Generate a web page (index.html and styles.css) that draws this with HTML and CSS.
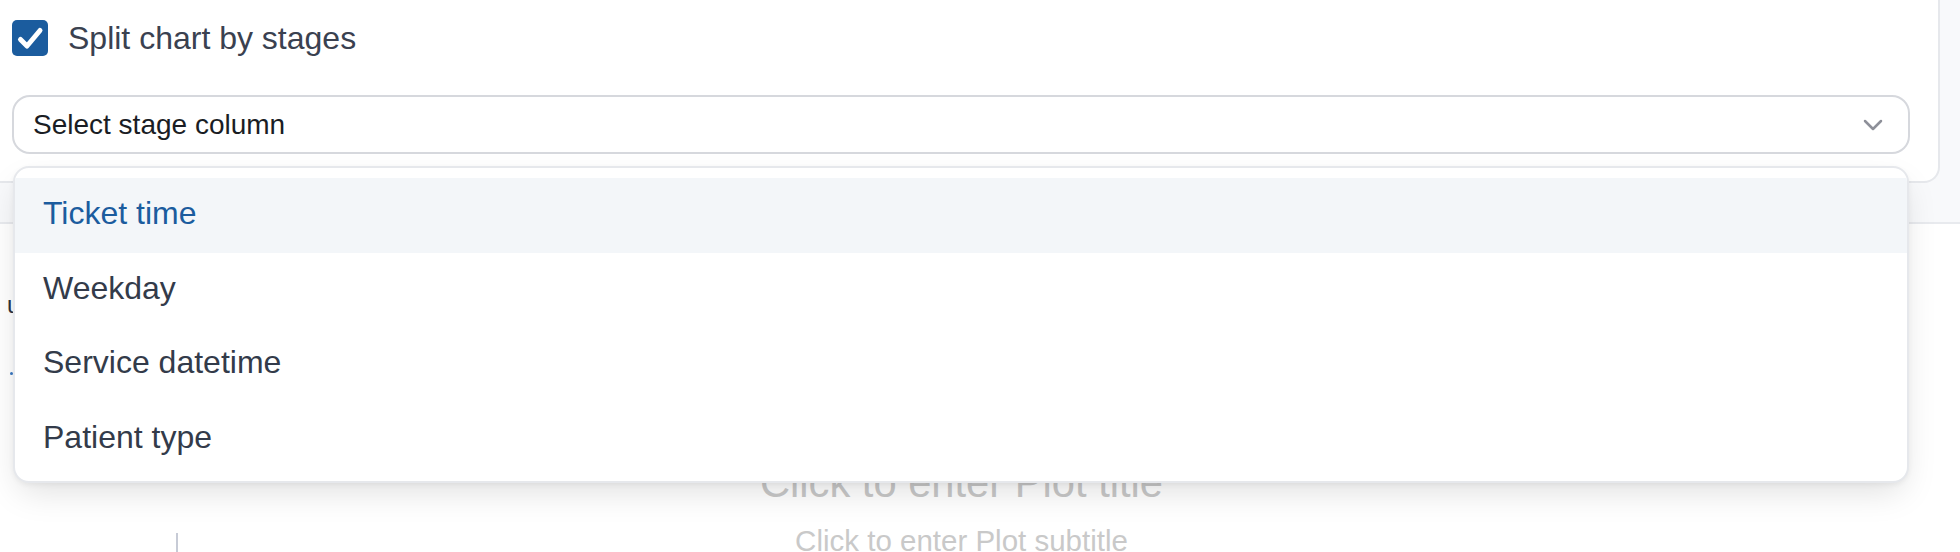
FILE: index.html
```html
<!DOCTYPE html>
<html lang="en">
<head>
<meta charset="utf-8">
<title>Split chart by stages</title>
<link rel="stylesheet" href="styles.css">
</head>
<body>
<div class="page">
  <div class="top">
    <div class="card">
      <label class="check-row">
        <svg class="checkbox" width="36" height="36" viewBox="0 0 36 36">
          <rect x="0" y="0" width="36" height="36" rx="5" fill="#1b5c9e"/>
          <path d="M8.5 19.5 L15 26 L28 10.5" fill="none" stroke="#fff" stroke-width="5" stroke-linecap="round" stroke-linejoin="round"/>
        </svg>
        <span class="check-label">Split chart by stages</span>
      </label>
      <div class="select-wrap">
        <div class="select">
          <span class="select-text">Select stage column</span>
          <svg class="chevron" width="20" height="12" viewBox="0 0 20 12">
            <path d="M2 2 L10 10 L18 2" fill="none" stroke="#8e9099" stroke-width="2.5" stroke-linecap="round" stroke-linejoin="round"/>
          </svg>
        </div>
        <ul class="menu">
          <li class="item active">Ticket time</li>
          <li class="item">Weekday</li>
          <li class="item">Service datetime</li>
          <li class="item">Patient type</li>
        </ul>
      </div>
    </div>
  </div>
  <div class="main">
    <div class="side-label">units</div>
    <div class="dot"></div>
    <div class="plot">
      <div class="plot-title">Click to enter Plot title</div>
      <div class="plot-subtitle">Click to enter Plot subtitle</div>
      <div class="axis"></div>
    </div>
  </div>
</div>
</body>
</html>
```
FILE: styles.css
```css
* { box-sizing: border-box; }
html, body { margin: 0; padding: 0; }
body {
  width: 1960px;
  height: 552px;
  overflow: hidden;
  background: #ffffff;
  font-family: "Liberation Sans", Arial, Helvetica, sans-serif;
}
.page { width: 1960px; height: 552px; overflow: hidden; }

.top {
  height: 224px;
  background: #f8f9fb;
  border-bottom: 2px solid #e8eaee;
}
.card {
  width: 1942px;
  height: 183px;
  margin-left: -2px;
  background: #ffffff;
  border: 2px solid #e6e8ec;
  border-top: none;
  border-radius: 0 0 16px 0;
  padding: 20px 28px 0 12px;
}
.check-row {
  display: flex;
  align-items: center;
  gap: 20px;
  height: 36px;
}
.checkbox { display: block; flex: none; }
.check-label {
  font-size: 32px;
  line-height: 36px;
  color: #3a4150;
}
.select-wrap {
  position: relative;
  margin-top: 39px;
}
.select {
  height: 59px;
  border: 2px solid #d6d8dd;
  border-radius: 18px;
  background: #fff;
  display: flex;
  align-items: center;
  justify-content: space-between;
  padding: 0 25px 0 19px;
}
.select-text {
  font-size: 28px;
  line-height: 34px;
  color: #1a1d24;
}
.chevron { display: block; }

.menu {
  position: absolute;
  top: 71px;
  left: 1px;
  width: 1896px;
  height: 317px;
  margin: 0;
  padding: 10px 0 0;
  list-style: none;
  background: #ffffff;
  border: 2px solid #e6e8ec;
  border-radius: 16px;
  box-shadow: 0 14px 34px -6px rgba(0, 0, 0, 0.13), 0 2px 5px rgba(0, 0, 0, 0.05);
  overflow: hidden;
  z-index: 10;
}
.item {
  height: 74.67px;
  padding: 11px 28px 0;
  font-size: 32px;
  line-height: 48px;
  color: #333b4a;
  white-space: nowrap;
}
.item.active {
  background: #f3f6f9;
  color: #1b5c9e;
}

.main {
  position: relative;
  height: 328px;
  background: #ffffff;
}
.side-label {
  margin: 67px 0 0 7px;
  font-size: 24px;
  line-height: 28px;
  color: #2d3340;
  white-space: nowrap;
}
.dot {
  width: 3px;
  height: 3px;
  border-radius: 50%;
  background: #3a78c2;
  margin: 53px 0 0 10px;
}
.plot {
  position: relative;
  padding-right: 37px;
  margin-top: 83px;
  text-align: center;
}
.plot-title {
  font-size: 41.7px;
  line-height: 50px;
  color: #c8c8c8;
  white-space: nowrap;
}
.plot-subtitle {
  margin-top: 15px;
  font-size: 29.5px;
  line-height: 36px;
  color: #c9c9c9;
  white-space: nowrap;
}
.axis {
  position: absolute;
  left: 176px;
  top: 75px;
  width: 2px;
  height: 40px;
  background: #c7cbd6;
}
```
